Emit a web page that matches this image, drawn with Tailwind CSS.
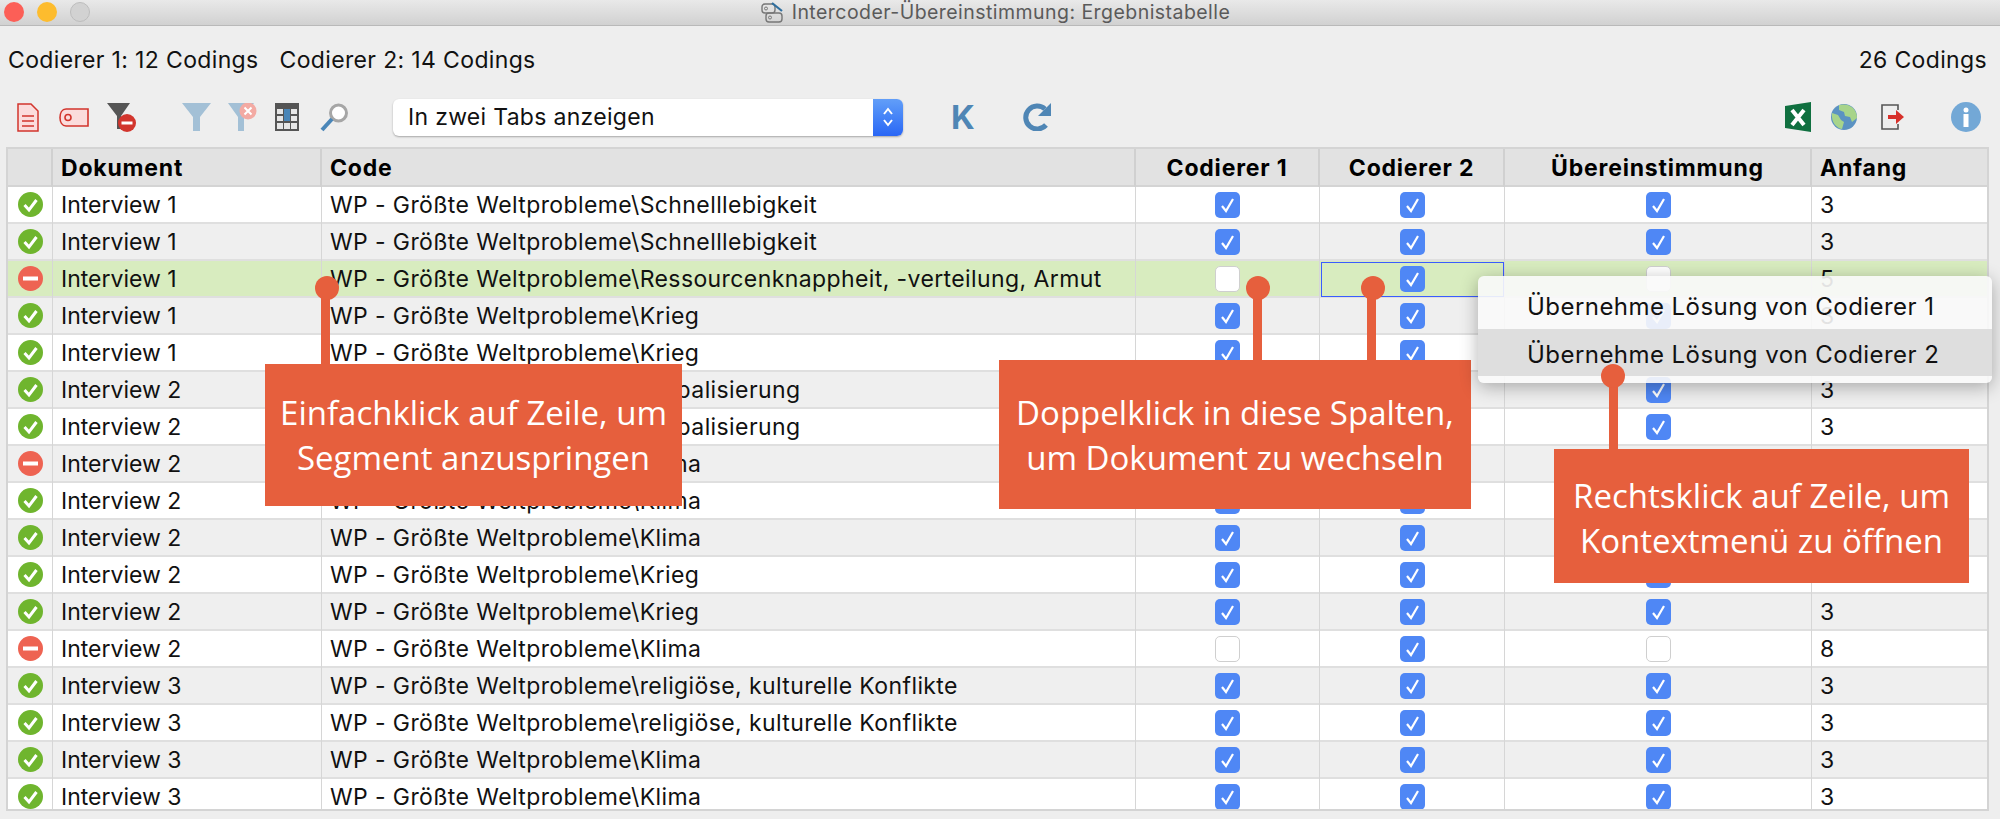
<!DOCTYPE html>
<html lang="de">
<head>
  <meta charset="UTF-8" />
  <title>Intercoder-Übereinstimmung: Ergebnistabelle</title>
  <script src="https://cdn.jsdelivr.net/npm/@tailwindcss/browser@4"></script>
</head>
<body class="bg-[#eeeeee] text-black font-['Inter',sans-serif] overflow-hidden">
<div class="relative w-[2000px] h-[819px] overflow-hidden">

  <!-- title bar -->
  <div class="relative h-[26px] pr-[9px] flex items-center justify-center gap-[7px] bg-gradient-to-b from-[#e9e9e9] to-[#d1d1d1] border-b border-[#b9b9b9]">
    <div class="absolute left-[4px] top-[2px] flex gap-[13px]">
      <span class="w-[20px] h-[20px] rounded-full bg-[#fc5f57]"></span>
      <span class="w-[20px] h-[20px] rounded-full bg-[#fdbc2e]"></span>
      <span class="w-[20px] h-[20px] rounded-full bg-[#d2d2d2] border border-[#bdbdbd]"></span>
    </div>
    <svg class="w-[24px] h-[22px]" viewBox="0 0 24 22" fill="none">
      <rect x="1" y="2" width="13" height="9" rx="3" stroke="#777" stroke-width="1.4"/>
      <rect x="5" y="11" width="16" height="9" rx="3" stroke="#777" stroke-width="1.4"/>
      <circle cx="5" cy="6.5" r="1.5" stroke="#777"/>
      <circle cx="9" cy="15.5" r="1.5" stroke="#777"/>
      <path d="M11 1l10 8" stroke="#2f6f9f" stroke-width="2.2"/>
    </svg>
    <span class="text-[19.5px] tracking-[0.45px] text-[#5a5a5a] leading-none">Intercoder-Übereinstimmung: Ergebnistabelle</span>
  </div>

  <!-- counts -->
  <div class="h-[68px] flex items-center px-[8px] text-[23px] tracking-[0.35px] text-[#111]">
    <span>Codierer 1: 12 Codings</span>
    <span class="ml-[21px]">Codierer 2: 14 Codings</span>
    <span class="ml-auto mr-[5px]">26 Codings</span>
  </div>

  <!-- toolbar -->
  <div class="h-[46px] flex items-center pl-[17px]">
    <svg class="w-[22px] h-[29px]" viewBox="0 0 22 29" fill="#fbdcdc" stroke="#d2352d" stroke-width="1.5">
      <path d="M1 1h13l7 7v20H1z"/><path d="M5 13h12M5 18h12M5 23h12" fill="none"/>
    </svg>
    <svg class="ml-[20px] w-[30px] h-[19px]" viewBox="0 0 30 19" fill="#fbdcdc" stroke="#d2352d" stroke-width="1.6">
      <path d="M7 1h22v17H7C3 18 1 14 1 9.500S3 1 7 1z"/><circle cx="9" cy="9.500" r="3" fill="none"/>
    </svg>
    <svg class="ml-[18px] w-[29px] h-[29px]" viewBox="0 0 29 29">
      <path d="M0 0h23L14 13v13h-4V13z" fill="#555"/>
      <circle cx="20" cy="20" r="9" fill="#d2352d"/><rect x="14.500" y="18.500" width="11" height="3" fill="#fff"/>
    </svg>
    <svg class="ml-[46px] w-[29px] h-[28px]" viewBox="0 0 29 28">
      <path d="M0 0h29L18 14v14h-7V14z" fill="#a3c0d6"/>
    </svg>
    <svg class="ml-[17px] w-[29px] h-[28px]" viewBox="0 0 29 28">
      <path d="M0 0h26L16 14v14H10V14z" fill="#a3c0d6"/>
      <circle cx="20" cy="8" r="8.500" fill="#f3aaa3"/><path d="M16.500 4.500l7 7M23.500 4.500l-7 7" stroke="#fff" stroke-width="2"/>
    </svg>
    <svg class="ml-[18px] w-[24px] h-[28px]" viewBox="0 0 24 28">
      <rect width="24" height="28" fill="#555"/>
      <g fill="#e6e6e6">
        <rect x="2" y="6" width="6" height="5"/><rect x="16" y="6" width="6" height="5"/>
        <rect x="2" y="13" width="6" height="5"/><rect x="16" y="13" width="6" height="5"/>
        <rect x="2" y="20" width="6" height="6"/><rect x="9" y="20" width="6" height="6"/><rect x="16" y="20" width="6" height="6"/>
      </g>
      <rect x="9" y="6" width="6" height="12" fill="#4a86b8"/>
    </svg>
    <svg class="ml-[21px] w-[29px] h-[29px]" viewBox="0 0 29 29">
      <circle cx="18.500" cy="10" r="8" fill="#fff" stroke="#a6a6a6" stroke-width="3"/>
      <path d="M12 16L2 27" stroke="#4a86b8" stroke-width="4"/>
    </svg>

    <!-- combobox -->
    <div class="ml-[44px] w-[510px] h-[37px] flex rounded-[6px] bg-white shadow-[0_1px_2px_rgba(0,0,0,0.3)] overflow-hidden">
      <span class="flex-1 pl-[15px] text-[23px] tracking-[0.3px] leading-[37px] text-[#111]">In zwei Tabs anzeigen</span>
      <span class="w-[30px] flex items-center justify-center bg-gradient-to-b from-[#629ef8] to-[#2a66f5]">
        <svg class="w-[14px] h-[24px]" viewBox="0 0 14 24" fill="none" stroke="#fff" stroke-width="2"><path d="M3 9l4-5 4 5M3 15l4 5 4-5"/></svg>
      </span>
    </div>

    <span class="ml-[48px] w-[20px] text-[33px] leading-none font-bold text-[#4f86b5]">K</span>
    <svg class="ml-[51px] w-[30px] h-[28px]" viewBox="0 0 30 28" fill="none">
      <path d="M24 22a11.500 11.500 0 1 1 -1 -16" stroke="#4f86b5" stroke-width="5"/>
      <path d="M29 0v13H16z" fill="#4f86b5"/>
    </svg>

    <svg class="ml-[733px] w-[26px] h-[30px]" viewBox="0 0 26 30">
      <path d="M0 4L26 0v30L0 26z" fill="#107040"/>
      <path d="M7 8l12 15M19 8L7 23" stroke="#fff" stroke-width="4"/>
    </svg>
    <svg class="ml-[20px] w-[26px] h-[26px]" viewBox="0 0 26 26">
      <circle cx="13" cy="13" r="13" fill="#5b92c2"/>
      <path d="M8 1c4-1 10-1 14 3 3 3 4 7 4 10l-5 4-2-5-5-1-1-4-5-2zM1 9l6 2 3 5 3 2-2 7C5 24 0 18 1 9z" fill="#a7d48b"/>
    </svg>
    <svg class="ml-[24px] w-[24px] h-[26px]" viewBox="0 0 24 26" fill="none">
      <path d="M17 6V1H1v24h16v-5" stroke="#555" stroke-width="1.6"/>
      <path d="M7 11h8V6l8 7-8 7v-5H7z" fill="#d7302a"/>
    </svg>
    <svg class="ml-[46px] w-[30px] h-[30px]" viewBox="0 0 30 30">
      <circle cx="15" cy="15" r="15" fill="#73a8d6"/>
      <circle cx="15" cy="8" r="2.500" fill="#fff"/><rect x="12.500" y="12" width="5" height="13" fill="#fff"/>
    </svg>
  </div>

  <!-- table -->
  <div class="mt-[7px] ml-[6px] w-[1983px] h-[664px] border-2 border-[#d4d4d4] overflow-hidden text-[#111]">
    <div class="h-[38px] grid grid-cols-[45px_269px_814px_184px_185px_307px_1fr] bg-[#e2e2e2] border-b-2 border-[#d4d4d4] text-[23px] tracking-[0.8px] font-bold leading-[38px] text-black">
      <div class="border-r-2 border-[#d0d0d0]"></div>
      <div class="border-r-2 border-[#d0d0d0] pl-[8px]">Dokument</div>
      <div class="border-r-2 border-[#d0d0d0] pl-[8px]">Code</div>
      <div class="border-r-2 border-[#d0d0d0] text-center">Codierer 1</div>
      <div class="border-r-2 border-[#d0d0d0] text-center">Codierer 2</div>
      <div class="border-r-2 border-[#d0d0d0] text-center">Übereinstimmung</div>
      <div class="pl-[8px]">Anfang</div>
    </div>
    <div id="rows"></div>
  </div>

  <!-- callouts -->
  <div class="absolute left-[321px] top-[288px] w-[9px] h-[80px] bg-[#e65f3d]"></div>
  <div class="absolute left-[315px] top-[276px] w-[24px] h-[24px] rounded-full bg-[#e65f3d]"></div>
  <div class="absolute left-[265px] top-[364px] w-[417px] h-[142px] flex items-center justify-center text-center bg-[#e65f3d] text-white font-['Open_Sans',sans-serif] text-[33px] leading-[45px]">
    <p>Einfachklick auf Zeile, um<br />Segment anzuspringen</p>
  </div>

  <div class="absolute left-[1253px] top-[288px] w-[9px] h-[75px] bg-[#e65f3d]"></div>
  <div class="absolute left-[1246px] top-[276px] w-[24px] h-[24px] rounded-full bg-[#e65f3d]"></div>
  <div class="absolute left-[1367px] top-[288px] w-[9px] h-[75px] bg-[#e65f3d]"></div>
  <div class="absolute left-[1361px] top-[276px] w-[24px] h-[24px] rounded-full bg-[#e65f3d]"></div>
  <div class="absolute left-[999px] top-[360px] w-[472px] h-[149px] flex items-center justify-center text-center bg-[#e65f3d] text-white font-['Open_Sans',sans-serif] text-[33px] leading-[45px]">
    <p>Doppelklick in diese Spalten,<br />um Dokument zu wechseln</p>
  </div>

  <!-- context menu -->
  <div class="absolute left-[1478px] top-[276px] w-[514px] h-[107px] pt-[7px] rounded-[6px] bg-[#fafafa]/90 shadow-[0_4px_18px_rgba(0,0,0,0.3)] text-[24px] tracking-[0.45px] text-[#111]">
    <div class="h-[46px] pl-[49px] leading-[48px]">Übernehme Lösung von Codierer 1</div>
    <div class="h-[47px] pl-[49px] leading-[51px] bg-[#dedede]">Übernehme Lösung von Codierer 2</div>
  </div>

  <div class="absolute left-[1609px] top-[376px] w-[9px] h-[76px] bg-[#e65f3d]"></div>
  <div class="absolute left-[1601px] top-[364px] w-[24px] h-[24px] rounded-full bg-[#e65f3d]"></div>
  <div class="absolute left-[1554px] top-[449px] w-[415px] h-[134px] pt-[3px] flex items-center justify-center text-center bg-[#e65f3d] text-white font-['Open_Sans',sans-serif] text-[33px] leading-[45px]">
    <p>Rechtsklick auf Zeile, um<br />Kontextmenü zu öffnen</p>
  </div>
</div>

<script>
  const P = 'WP - Größte Weltprobleme\\';
  // the Anfang values of rows 7-10 lie under the third callout
  const data = [
    ['Interview 1', 'Schnelllebigkeit', 1, 1, 1, 3],
    ['Interview 1', 'Schnelllebigkeit', 1, 1, 1, 3],
    ['Interview 1', 'Ressourcenknappheit, -verteilung, Armut', 0, 1, 0, 5],
    ['Interview 1', 'Krieg', 1, 1, 1, 3],
    ['Interview 1', 'Krieg', 1, 1, 1, 3],
    ['Interview 2', 'Globalisierung', 1, 1, 1, 3],
    ['Interview 2', 'Globalisierung', 1, 1, 1, 3],
    ['Interview 2', 'Klima', 0, 1, 0, ''],
    ['Interview 2', 'Klima', 1, 1, 1, ''],
    ['Interview 2', 'Klima', 1, 1, 1, ''],
    ['Interview 2', 'Krieg', 1, 1, 1, ''],
    ['Interview 2', 'Krieg', 1, 1, 1, 3],
    ['Interview 2', 'Klima', 0, 1, 0, 8],
    ['Interview 3', 'religiöse, kulturelle Konflikte', 1, 1, 1, 3],
    ['Interview 3', 'religiöse, kulturelle Konflikte', 1, 1, 1, 3],
    ['Interview 3', 'Klima', 1, 1, 1, 3],
    ['Interview 3', 'Klima', 1, 1, 1, 3],
  ];

  const okIcon = `<svg class="w-[25px] h-[25px]" viewBox="0 0 25 25"><circle cx="12.5" cy="12.5" r="12.5" fill="#6fb52e"/><path d="M6.5 13l4.500 5 7.500-10" fill="none" stroke="#fff" stroke-width="3"/></svg>`;
  const noIcon = `<svg class="w-[25px] h-[25px]" viewBox="0 0 25 25"><circle cx="12.5" cy="12.5" r="12.5" fill="#ee6352"/><rect x="5" y="10.5" width="15" height="4" fill="#fff"/></svg>`;
  const onBox = `<svg class="w-[25px] h-[26px]" viewBox="0 0 25 26"><rect width="25" height="26" rx="5" fill="#4f87f5"/><path d="M7 14l4 5 7-12" fill="none" stroke="#fff" stroke-width="2.2"/></svg>`;
  const offBox = `<span class="block w-[25px] h-[26px] rounded-[5px] bg-white border border-[#cfcfcf]"></span>`;

  const line = 'border-r border-[#d6d6d6]';
  document.getElementById('rows').innerHTML = data.map((d, i) => {
    const bg = i === 2 ? 'bg-[#d8ecbf]' : i % 2 ? 'bg-[#efefef]' : 'bg-white';
    const match = d[2] && d[3];
    const active = i === 2 ? 'outline outline-1 -outline-offset-2 outline-[#3a5cff]' : '';
    return `<div class="h-[37px] grid grid-cols-[45px_269px_814px_184px_185px_307px_1fr] ${bg} border-b-2 border-[#dfdfdf] leading-[37px]">
      <div class="${line} pl-[1px] pb-[2px] flex items-center justify-center">${match ? okIcon : noIcon}</div>
      <div class="${line} pl-[8px] text-[23px]">${d[0]}</div>
      <div class="${line} pl-[8px] text-[23px] tracking-[0.4px]">${P}${d[1]}</div>
      <div class="${line} pb-[2px] flex items-center justify-center">${d[2] ? onBox : offBox}</div>
      <div class="${line} pb-[2px] flex items-center justify-center ${active}">${d[3] ? onBox : offBox}</div>
      <div class="${line} pb-[2px] flex items-center justify-center">${d[4] ? onBox : offBox}</div>
      <div class="pl-[8px] text-[23px]">${d[5]}</div>
    </div>`;
  }).join('');
</script>
</body>
</html>
